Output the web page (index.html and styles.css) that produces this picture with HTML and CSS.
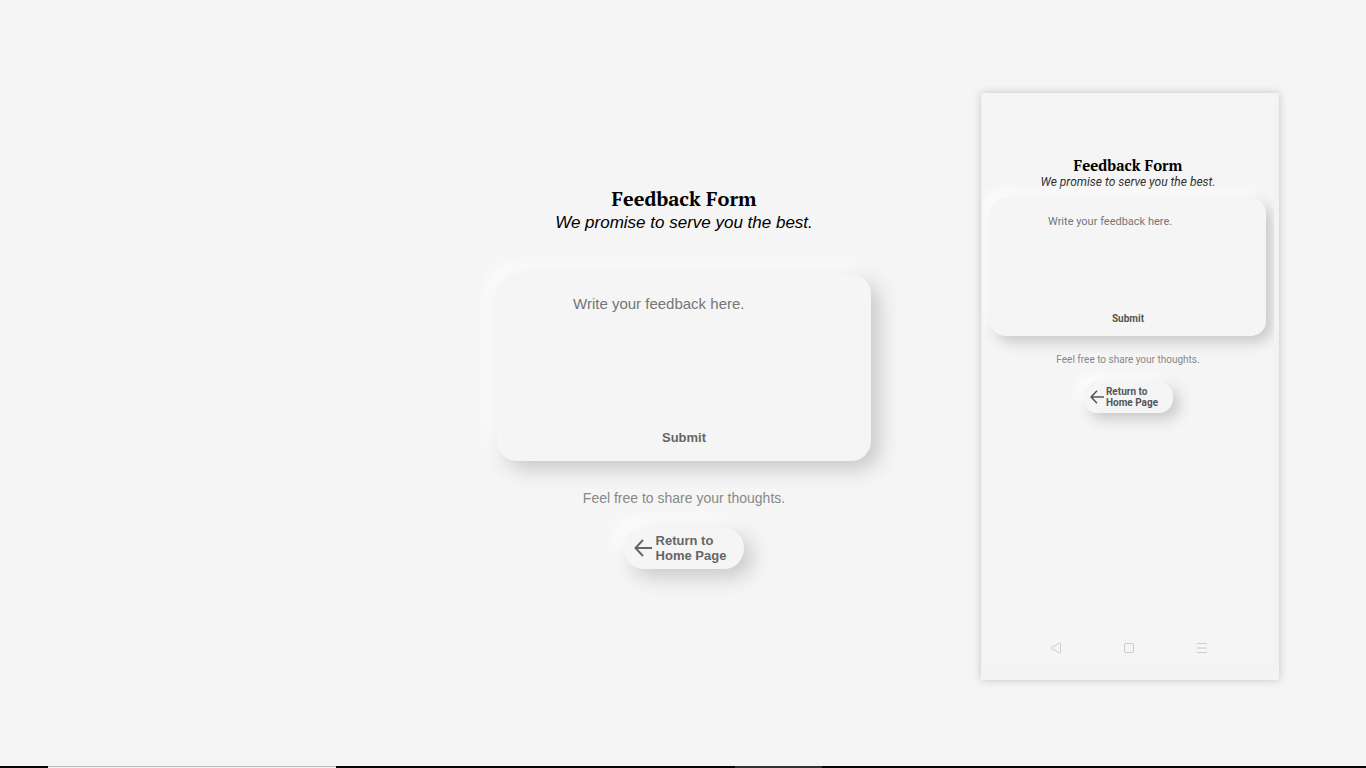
FILE: index.html
```html
<!DOCTYPE html>
<html lang="en">
<head>
<meta charset="utf-8">
<meta name="viewport" content="width=device-width, initial-scale=1">
<title>Feedback Form</title>
<link rel="stylesheet" href="styles.css">
</head>
<body>
<div class="stage">
  <main class="feedback">
    <h1 class="title">Feedback Form</h1>
    <p class="subtitle">We promise to serve you the best.</p>
    <form class="card">
      <textarea class="message" aria-label="Feedback" placeholder="Write your feedback here."></textarea>
      <button class="submit" type="submit">Submit</button>
    </form>
    <p class="note">Feel free to share your thoughts.</p>
    <button class="home" type="button">
      <svg class="arrow" viewBox="0 0 18 18" aria-hidden="true"><path d="M18 9H2M9 1L1.500 9L9 17"/></svg>
      <span>Return to<br>Home Page</span>
    </button>
  </main>
  <aside class="phone">
    <div class="screen">
      <section class="feedback mobile">
        <h2 class="title">Feedback Form</h2>
        <p class="subtitle">We promise to serve you the best.</p>
        <form class="card">
          <textarea class="message" aria-label="Mobile feedback" placeholder="Write your feedback here."></textarea>
          <button class="submit" type="submit">Submit</button>
        </form>
        <p class="note">Feel free to share your thoughts.</p>
        <button class="home" type="button">
          <svg class="arrow" viewBox="0 0 18 18" aria-hidden="true"><path d="M18 9H2M9 1L1.500 9L9 17"/></svg>
          <span>Return to<br>Home Page</span>
        </button>
      </section>
      <nav class="keys">
        <button class="key" type="button" aria-label="Back"><svg viewBox="0 0 12 12"><path d="M9.500 1.200L1.800 5.300Q.8 6 1.800 6.700L9.500 10.800Q10.500 11 10.500 10V2Q10.500 1 9.500 1.200Z"/></svg></button>
        <button class="key" type="button" aria-label="Home"><svg viewBox="0 0 12 12"><rect x="1.500" y="1.500" width="9" height="9" rx="1.500"/></svg></button>
        <button class="key" type="button" aria-label="Menu"><svg viewBox="0 0 12 12"><path d="M1 1.500H11M1 6H11M1 10.500H11"/></svg></button>
      </nav>
    </div>
  </aside>
</div>
<footer class="taskbar"><span class="search"></span><span class="window"></span></footer>
</body>
</html>
```

FILE: styles.css
```css
* { box-sizing: border-box; }
body {
  margin: 0;
  min-height: 100vh;
  display: flex;
  flex-direction: column;
  background: #f5f5f5;
  font-family: "Liberation Sans", Arial, sans-serif;
}
.stage {
  flex: 1;
  display: grid;
  grid-template-columns: 1fr 374px 1fr;
  align-items: start;
  padding: 93px 0 0 2px;
}
.feedback {
  grid-column: 2;
  display: flex;
  flex-direction: column;
  align-items: center;
  padding-top: 92px;
}
.title, .subtitle, .note { margin: 0; }
.title {
  font: bold 20px/28px "PT Serif", "Liberation Serif", serif;
  color: #000;
}
.subtitle {
  font-size: 17px;
  line-height: 20px;
  font-style: italic;
}
.card {
  width: 100%;
  display: flex;
  flex-direction: column;
  align-items: center;
  margin-top: 41px;
  padding: 20px 20px 9px;
  border-radius: 20px;
  background: #f5f5f5;
  box-shadow: 8px 8px 20px #c8c8c8, -8px -8px 20px #fff;
}
.message {
  width: 222px;
  height: 129px;
  border: 0;
  padding: 0;
  background: transparent;
  resize: none;
  outline: 0;
  font: 15px/20px "Liberation Sans", Arial, sans-serif;
}
.message::placeholder { color: #757575; opacity: 1; }
.submit, .home {
  border: 0;
  color: #666;
  font: bold 13px/15px "Liberation Sans", Arial, sans-serif;
}
.submit { padding: 7px 12px; background: transparent; }
.note {
  margin-top: 28px;
  font-size: 14px;
  line-height: 18px;
  color: #888;
}
.home {
  display: flex;
  align-items: center;
  gap: 4px;
  margin-top: 21px;
  padding: 5px 18px 6px 10px;
  border-radius: 20px;
  background: #f5f5f5;
  box-shadow: 8px 8px 20px #c8c8c8, -8px -8px 20px #fff;
  text-align: left;
}
.arrow {
  width: 18px;
  height: 18px;
  fill: none;
  stroke: #666;
  stroke-width: 2;
}
.phone {
  grid-column: 3;
  justify-self: end;
  width: 298px;
  margin-right: 87px;
  padding: 0 5px 15px 2px;
  background: #f3f3f3;
  box-shadow: 0 0 8px #c4c4c4;
}
.screen {
  display: flex;
  flex-direction: column;
  overflow: hidden;
  background: #f5f5f5;
}
.mobile { padding: 62px 8px 0 7px; }
.mobile .title { font-size: 15px; line-height: 20px; }
.mobile .subtitle {
  font-family: Roboto, sans-serif;
  font-size: 12px;
  line-height: 15px;
  color: #222;
}
.mobile .card {
  margin-top: 8px;
  padding: 16px 16px 8px;
  border-radius: 15px;
  box-shadow: 6px 6px 14px #c8c8c8, -6px -6px 14px #fff;
}
.mobile .message {
  width: 160px;
  height: 95px;
  font: 11px/15px Roboto, sans-serif;
}
.mobile .submit, .mobile .home { font: bold 10px/11px Roboto, sans-serif; color: #555; }
.mobile .submit { padding: 4px 8px; }
.mobile .note {
  margin-top: 16px;
  font: 10px/15px Roboto, sans-serif;
}
.mobile .home {
  gap: 2px;
  margin-top: 15px;
  padding: 4px 15px 5px 7px;
  border-radius: 14px;
  box-shadow: 6px 6px 14px #c8c8c8, -6px -6px 14px #fff;
}
.mobile .arrow { width: 14px; height: 14px; stroke: #555; }
.keys {
  display: flex;
  justify-content: center;
  gap: 61px;
  padding: 229px 0 11px;
}
.key { display: flex; padding: 0; border: 0; background: transparent; }
.key svg { width: 12px; height: 12px; fill: none; stroke: #ccc; stroke-width: 1; }
.taskbar {
  display: flex;
  height: 2px;
  background: #07050a;
}
.search {
  width: 288px;
  margin-left: 48px;
  border-top: 1px solid #bbb;
  background: #f4f4f4;
}
.window { width: 87px; margin-left: 399px; background: #333; }
```
